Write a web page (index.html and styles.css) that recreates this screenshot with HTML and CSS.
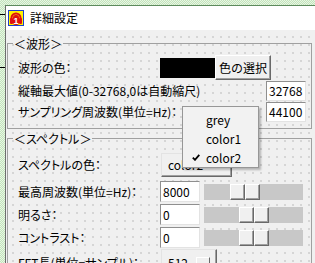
FILE: index.html
```html
<!DOCTYPE html>
<html lang="ja">
<head>
<meta charset="utf-8">
<title>詳細設定</title>
<link rel="stylesheet" href="styles.css">
</head>
<body>
<div class="topstrip"></div>
<div class="main">
  <div class="leftstrip"><span class="tick t1"></span><span class="tick t2"></span></div>
  <div class="window">
    <div class="titlebar">
      <svg class="appicon" viewBox="0 0 16 16" aria-hidden="true">
        <rect x="0.5" y="0.5" width="15" height="15" fill="#fff200" stroke="#1c3fd0"/>
        <path d="M3.5 10 V8 A4.5 4.5 0 0 1 12.5 8 V10" fill="none" stroke="#e01010" stroke-width="2"/>
        <rect x="2" y="8" width="3" height="6" rx="1" fill="#e01010"/>
        <rect x="11" y="8" width="3" height="6" rx="1" fill="#e01010"/>
        <rect x="5" y="5" width="6" height="10" rx="2.5" fill="#e01010"/>
        <text x="8" y="13.5" font-size="9" font-weight="bold" fill="#fff" text-anchor="middle" font-family="Liberation Sans, sans-serif">1</text>
      </svg>
      <span class="title">詳細設定</span>
    </div>
    <div class="client">
      <fieldset class="group g1">
        <legend>＜波形＞</legend>
        <div class="rows">
          <div class="row row-tall">
            <span class="lbl">波形の色：</span>
            <span class="swatch"></span>
            <button class="btn" type="button">色の選択</button>
          </div>
          <div class="row row-edit">
            <span class="lbl lbl-auto">縦軸最大値(0-32768,0は自動縮尺)</span>
            <span class="edit edit-end">32768</span>
          </div>
          <div class="row row-edit">
            <span class="lbl lbl-auto">サンプリング周波数(単位=Hz)：</span>
            <span class="edit edit-end">44100</span>
          </div>
        </div>
      </fieldset>
      <fieldset class="group g2">
        <legend>＜スペクトル＞</legend>
        <div class="rows">
          <div class="row row-combo">
            <span class="lbl">スペクトルの色：</span>
            <span class="combo combo-color">color2</span>
          </div>
          <div class="row row-slider">
            <span class="lbl">最高周波数(単位=Hz)：</span>
            <span class="edit">8000</span>
            <span class="track"><span class="thumb" style="left:26px"><i></i><i></i></span></span>
          </div>
          <div class="row row-slider">
            <span class="lbl">明るさ：</span>
            <span class="edit">0</span>
            <span class="track"><span class="thumb" style="left:35px"><i></i><i></i></span></span>
          </div>
          <div class="row row-slider">
            <span class="lbl">コントラスト：</span>
            <span class="edit">0</span>
            <span class="track"><span class="thumb" style="left:35px"><i></i><i></i></span></span>
          </div>
          <div class="row row-fft">
            <span class="lbl">FFT長(単位=サンプル)：</span>
            <span class="combo combo-fft"><span>512</span><span class="minibtn"></span></span>
          </div>
        </div>
      </fieldset>
    </div>
    <div class="menu">
      <div class="menu-item"><span class="mark"></span><span>grey</span></div>
      <div class="menu-item"><span class="mark"></span><span>color1</span></div>
      <div class="menu-item"><span class="mark"><svg viewBox="0 0 8 7" width="8" height="7" aria-hidden="true"><path d="M0.8 3.6 L3 5.8 L7.3 0.9" fill="none" stroke="#000" stroke-width="1.8"/></svg></span><span>color2</span></div>
    </div>
  </div>
</div>
</body>
</html>
```

FILE: styles.css
```css
* { box-sizing: border-box; }
html, body { margin: 0; padding: 0; }
body {
  width: 315px;
  height: 263px;
  overflow: hidden;
  font-family: "Noto Sans CJK JP", "Noto Sans", sans-serif;
  font-size: 12px;
  color: #000;
  background: repeating-conic-gradient(#c2e4bb 0 25%, #e8f5e4 0 50%) 0 0 / 2px 2px;
}
.topstrip { height: 5px; }
.main { display: flex; height: 258px; }
.leftstrip { width: 5px; flex: none; display: flex; flex-direction: column; }
.tick { display: block; width: 6px; height: 1px; background: #000; }
.t1 { margin-top: 9px; }
.t2 { margin-top: 52px; }

.window {
  position: relative;
  flex: 1;
  display: flex;
  flex-direction: column;
  border-top: 1px solid #5d8a5d;
  border-left: 1px solid #6d6d6d;
  background: #fff;
  min-width: 0;
}
.titlebar {
  height: 24px;
  flex: none;
  display: flex;
  align-items: center;
  padding-left: 2px;
  background: #fff;
}
.appicon { width: 16px; height: 16px; flex: none; }
.title { margin-left: 6px; line-height: 14px; }

.client {
  flex: 1;
  background-color: #f0f0f0;
  background-image: radial-gradient(circle, #c6c6c6 0.6px, transparent 0.9px);
  background-size: 8px 8px;
  background-position: 3px 3px;
  padding: 7px 3px 0 1px;
}

.group {
  margin: 0;
  padding: 0;
  border: 1px solid #a0a0a0;
  min-width: 0;
}
.group legend {
  margin-left: 5px;
  padding: 0 1px;
  line-height: 13px;
  font-feature-settings: "palt";
}
.g2 { margin-top: 3px; }

.rows {
  display: flex;
  flex-direction: column;
  padding: 5px 5px 6px 10px;
  gap: 1px;
}
.g2 .rows { padding-top: 8px; gap: 2px; }

.row { display: flex; align-items: center; }
.row-tall { height: 25px; }
.row-edit { height: 20px; }
.row-combo { height: 24px; margin-bottom: 2px; }
.row-slider { height: 21px; }
.row-fft { height: 28px; margin-top: -1px; }

.lbl {
  width: 142px;
  flex: none;
  white-space: nowrap;
  line-height: 14px;
  font-feature-settings: "palt";
}
.lbl-auto { width: auto; }

.swatch { width: 55px; height: 20px; background: #000; flex: none; }
.btn {
  width: 56px;
  height: 25px;
  flex: none;
  padding: 0;
  margin: 0;
  font: inherit;
  color: #000;
  background: #f0f0f0;
  border: 1px solid;
  border-color: #fff #696969 #696969 #fff;
  box-shadow: inset -1px -1px 0 #a0a0a0;
  line-height: 14px;
}

.edit {
  width: 40px;
  height: 100%;
  flex: none;
  background: #fff;
  border: 1px solid;
  border-color: #8f8f8f #e3e3e3 #e3e3e3 #8f8f8f;
  padding-left: 2px;
  display: flex;
  align-items: center;
  line-height: 14px;
}
.row-edit .edit { height: 20px; }
.edit-end { margin-left: auto; }

.combo {
  flex: none;
  height: 100%;
  margin-left: 1px;
  background: #f0f0f0;
  border: 1px solid;
  border-color: #e3e3e3 #696969 #696969 #e3e3e3;
  box-shadow: inset -1px -1px 0 #a0a0a0;
  display: flex;
  align-items: center;
  padding-left: 6px;
  line-height: 14px;
}
.combo-color { width: 71px; }
.combo-fft { width: 56px; }
.minibtn {
  width: 14px;
  height: 12px;
  margin-left: auto;
  margin-right: 6px;
  background: #f0f0f0;
  border: 1px solid;
  border-color: #fff #696969 #696969 #fff;
}

.track {
  position: relative;
  width: 99px;
  height: 16px;
  flex: none;
  margin-left: 4px;
  background: #c8c8c8;
}
.thumb {
  position: absolute;
  top: 0;
  width: 30px;
  height: 16px;
  display: flex;
}
.thumb i {
  width: 15px;
  height: 16px;
  background: #f0f0f0;
  border: 1px solid;
  border-color: #fff #696969 #696969 #fff;
  box-shadow: inset -1px -1px 0 #a0a0a0;
}

.menu {
  position: absolute;
  left: 176px;
  top: 100px;
  width: 77px;
  height: 62px;
  background: #f2f2f2;
  border: 1px solid #979797;
  box-shadow: 2px 2px 2px rgba(0, 0, 0, 0.25);
  padding-top: 3px;
}
.menu-item {
  height: 19px;
  display: flex;
  align-items: center;
  line-height: 14px;
}
.mark {
  width: 23px;
  flex: none;
  padding-left: 9px;
  display: flex;
  align-items: center;
}
.mark svg { display: block; }
```
